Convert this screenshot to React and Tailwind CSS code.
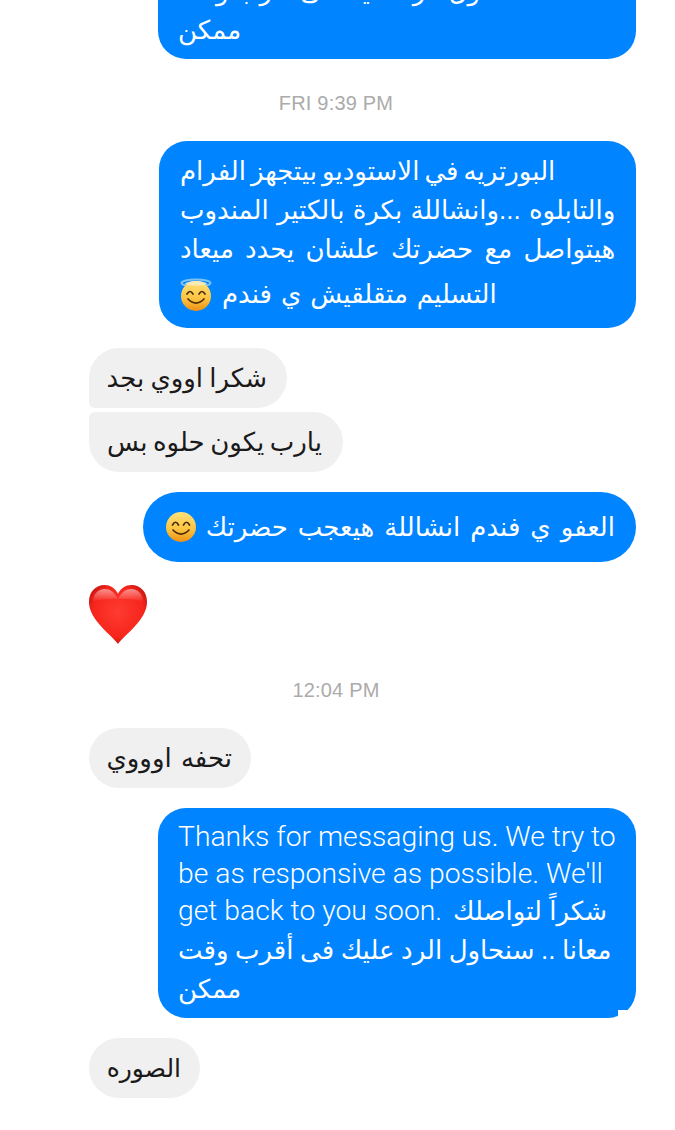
const ar = { fontFamily: '"Liberation Sans", "DejaVu Sans", sans-serif' };

function Heart() {
  return (
    <svg width="60" height="61" viewBox="0 0 62 62" preserveAspectRatio="none" className="block">
      <defs>
        <radialGradient id="hg" cx="0.5" cy="0.45" r="0.62">
          <stop offset="0" stopColor="#ff3b30" />
          <stop offset="0.7" stopColor="#f6251c" />
          <stop offset="1" stopColor="#b80f0f" />
        </radialGradient>
        <linearGradient id="hh" x1="0" y1="0" x2="0" y2="1">
          <stop offset="0" stopColor="#ffffff" stopOpacity="0.5" />
          <stop offset="1" stopColor="#ffffff" stopOpacity="0" />
        </linearGradient>
      </defs>
      <path d="M31 61 C25 52 1 37 1 18 C1 8 8 1 17 1 C23 1 28 4 31 10 C34 4 39 1 45 1 C54 1 61 8 61 18 C61 37 37 52 31 61 Z" fill="url(#hg)" />
      <path d="M5 18 C5 10 11 5 17 5 C23 5 27 8 31 15 C35 8 39 5 45 5 C51 5 57 10 57 18 C50 14 12 14 5 18 Z" fill="url(#hh)" />
    </svg>
  );
}

function Smile() {
  return (
    <svg width="30" height="30" viewBox="0 0 30 30" className="block shrink-0">
      <defs>
        <linearGradient id="sg" x1="0" y1="0" x2="0" y2="1">
          <stop offset="0" stopColor="#ffe27a" />
          <stop offset="0.6" stopColor="#fcc23e" />
          <stop offset="1" stopColor="#ee8f14" />
        </linearGradient>
      </defs>
      <circle cx="15" cy="15" r="15" fill="url(#sg)" />
      <path d="M6.5 13 Q9.5 7.5 12.5 13 M17.5 13 Q20.5 7.5 23.5 13" fill="none" stroke="#4a2c0a" strokeWidth="1.7" strokeLinecap="round" />
      <path d="M7 18 Q15 26 23 18" fill="none" stroke="#4a2c0a" strokeWidth="1.7" strokeLinecap="round" />
    </svg>
  );
}

function Halo() {
  return (
    <svg width="32" height="33" viewBox="0 0 32 33" className="block shrink-0">
      <defs>
        <linearGradient id="ag" x1="0" y1="0" x2="0" y2="1">
          <stop offset="0" stopColor="#ffe27a" />
          <stop offset="0.6" stopColor="#fcc23e" />
          <stop offset="1" stopColor="#ee8f14" />
        </linearGradient>
      </defs>
      <ellipse cx="16" cy="5" rx="14.5" ry="3.6" fill="none" stroke="#7cc4ee" strokeWidth="2" />
      <circle cx="16" cy="18" r="15" fill="url(#ag)" />
      <path d="M16 3 C9 3 5 5 5 6 C8 8 24 8 27 6 C27 5 23 3 16 3 Z" fill="#f8ecc0" opacity="0.85" />
      <path d="M7 16 Q10 11 13 16 M19 16 Q22 11 25 16" fill="none" stroke="#4a2c0a" strokeWidth="1.7" strokeLinecap="round" />
      <path d="M8 21 Q16 29 24 21" fill="none" stroke="#4a2c0a" strokeWidth="1.7" strokeLinecap="round" />
    </svg>
  );
}

function Auto({ notch }) {
  const en = { fontFamily: 'Roboto, "DejaVu Sans", sans-serif' };
  return (
    <div className="relative ml-[158px] w-[478px] h-[210px] rounded-[28px] bg-[#0084ff] text-white text-[27px] pl-5 pt-[10px]">
      <div className="h-[37px] leading-[37px] whitespace-nowrap font-light text-[28.3px]" style={en}>Thanks for messaging us. We try to</div>
      <div className="h-[37px] leading-[37px] whitespace-nowrap font-light text-[28.3px]" style={en}>be as responsive as possible. We'll</div>
      <div className="h-[38px] leading-[38px] whitespace-nowrap font-light text-[28.3px]" style={en}>get back to you soon. <span dir="rtl" className="inline-block ml-[4px] text-[26px] font-normal" style={ar}>شكراً لتواصلك</span></div>
      <div className="h-[40px] leading-[40px] w-fit whitespace-nowrap text-[26px] [word-spacing:-0.7px]" dir="rtl">معانا .. سنحاول الرد عليك فى أقرب وقت</div>
      <div className="h-[38px] leading-[38px] w-fit whitespace-nowrap text-[26px]" dir="rtl">ممكن</div>
      {notch && <div className="absolute left-[460px] top-[202px] w-[9px] h-[8px] bg-white" />}
    </div>
  );
}

function Left({ children, cls }) {
  return (
    <div className={"ml-[89px] h-[60px] bg-[#f1f0f0] text-[#1a1a1a] leading-[60px] whitespace-nowrap " + cls} dir="rtl">
      {children}
    </div>
  );
}

function Time({ children, cls }) {
  return <div className={"w-[672px] text-center text-[#ababab] text-[20px] leading-[24px] tracking-[0.2px] " + cls}>{children}</div>;
}

export default function App() {
  return (
    <div className="w-[675px] h-[1130px] overflow-hidden bg-white" style={ar}>
      <div className="mt-[-151px]">
        <Auto />
        <Time cls="mt-[32px]">FRI 9:39 PM</Time>
        <div className="ml-[159px] mt-[26px] w-[477px] h-[187px] rounded-[28px] bg-[#0084ff] text-white text-[26px] pl-[21px] pt-[11px]">
          <div className="h-[39px] leading-[39px] w-fit whitespace-nowrap [word-spacing:-2.2px]" dir="rtl">البورتريه في الاستوديو بيتجهز الفرام</div>
          <div className="h-[39px] leading-[39px] w-fit whitespace-nowrap [word-spacing:1px]" dir="rtl">والتابلوه ...وانشاللة بكرة بالكتير المندوب</div>
          <div className="h-[39px] leading-[39px] w-fit whitespace-nowrap [word-spacing:4px]" dir="rtl">هيتواصل مع حضرتك علشان يحدد ميعاد</div>
          <div className="h-[50px] w-fit whitespace-nowrap flex items-center gap-[10px] [word-spacing:1.7px]" dir="rtl">
            <span>التسليم متقلقيش ي فندم</span>
            <Halo />
          </div>
        </div>
        <Left cls="mt-[20px] w-[198px] rounded-[30px] rounded-bl-[6px] text-[26px] pr-[20px] [word-spacing:-1px]">شكرا اووي بجد</Left>
        <Left cls="mt-[4px] w-[254px] rounded-[30px] rounded-tl-[6px] text-[26px] pr-[21px] [word-spacing:-1.7px]">يارب يكون حلوه بس</Left>
        <div className="ml-[143px] mt-[20px] w-[493px] h-[70px] rounded-[35px] bg-[#0084ff] text-white text-[26px] pl-[20px] pr-[21px] flex items-center gap-[10px] [word-spacing:2.8px]" dir="rtl">
          <span className="whitespace-nowrap">العفو ي فندم انشاللة هيعجب حضرتك</span>
          <Smile />
        </div>
        <div className="ml-[88px] mt-[22px]"><Heart /></div>
        <Time cls="mt-[33px]">12:04 PM</Time>
        <Left cls="mt-[26px] w-[162px] rounded-[30px] text-[26px] pr-[19px] [word-spacing:2px]">تحفه اوووي</Left>
        <div className="mt-[20px]"><Auto notch /></div>
        <Left cls="mt-[20px] w-[111px] rounded-[30px] text-[25px] pr-[19px]">الصوره</Left>
      </div>
    </div>
  );
}
